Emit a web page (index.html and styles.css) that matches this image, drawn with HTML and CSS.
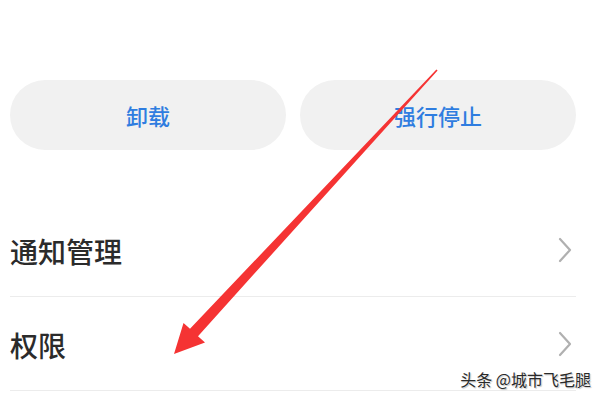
FILE: index.html
```html
<!DOCTYPE html>
<html lang="zh">
<head>
<meta charset="utf-8">
<link rel="stylesheet" href="styles.css">
</head>
<body>
<div class="page">
  <div class="actions">
    <div class="btn">卸载</div>
    <div class="btn">强行停止</div>
  </div>
  <div class="list">
    <div class="row">
      <span class="label">通知管理</span>
      <svg class="chev" width="16" height="26" viewBox="0 0 16 26"><path d="M3 2 L13 13 L3 24" fill="none" stroke="#b0b0b0" stroke-width="2.2" stroke-linecap="round" stroke-linejoin="round"/></svg>
    </div>
    <div class="row">
      <span class="label">权限</span>
      <svg class="chev" width="16" height="26" viewBox="0 0 16 26"><path d="M3 2 L13 13 L3 24" fill="none" stroke="#b0b0b0" stroke-width="2.2" stroke-linecap="round" stroke-linejoin="round"/></svg>
    </div>
  </div>
  <div class="watermark">头条 @城市飞毛腿</div>
  <svg class="arrow" width="600" height="400" viewBox="0 0 600 400">
    <polygon points="437.6,70.4 198,336.2 205,342.5 174,354 183.5,323 190,328.8 436.4,69.6" fill="#f53333"/>
  </svg>
</div>
</body>
</html>
```
FILE: styles.css
```css
html, body {
  margin: 0;
  padding: 0;
  background: #ffffff;
}
.page {
  position: relative;
  width: 600px;
  height: 400px;
  overflow: hidden;
  font-family: "Noto Sans CJK SC", "Noto Sans", sans-serif;
}
.actions {
  display: flex;
  gap: 14px;
  padding: 80px 24px 0 10px;
}
.btn {
  flex: 1;
  height: 70px;
  border-radius: 35px;
  background: #f1f1f1;
  color: #2f7de0;
  font-size: 22px;
  font-weight: 500;
  display: flex;
  align-items: center;
  justify-content: center;
}
.list {
  margin-top: 53px;
  padding: 0 24px 0 10px;
}
.row {
  height: 93px;
  border-bottom: 1.5px solid #ececec;
  display: flex;
  align-items: center;
  justify-content: space-between;
}
.label {
  font-size: 28px;
  font-weight: 500;
  color: #2b2b2b;
  padding-top: 2px;
}
.chev {
  margin-right: 3px;
}
.watermark {
  position: absolute;
  right: 9px;
  top: 367px;
  font-size: 16px;
  color: #2a2a2a;
  text-shadow: 0 0 2px #ffffff, 1px 1px 1px #bbbbbb;
}
.arrow {
  position: absolute;
  left: 0;
  top: 0;
}
```
